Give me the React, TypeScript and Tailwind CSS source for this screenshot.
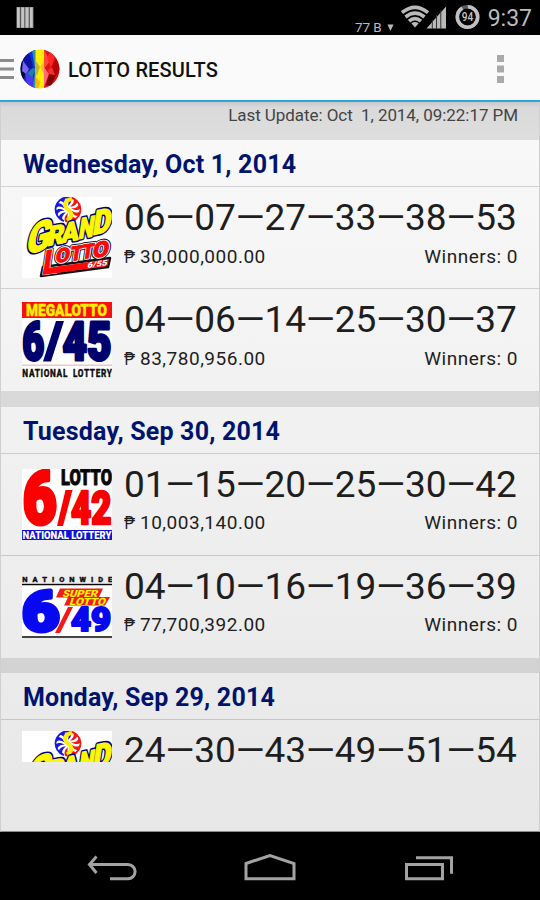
import type { ReactNode } from 'react';

type Game = 'grand' | 'mega' | 'lotto' | 'super';

interface Draw {
  game: Game;
  numbers: string[];
  prize: string;
  winners: number;
}

interface Day {
  date: string;
  draws: Draw[];
}

const DAYS: Day[] = [
  {
    date: 'Wednesday, Oct 1, 2014',
    draws: [
      { game: 'grand', numbers: ['06', '07', '27', '33', '38', '53'], prize: '30,000,000.00', winners: 0 },
      { game: 'mega', numbers: ['04', '06', '14', '25', '30', '37'], prize: '83,780,956.00', winners: 0 },
    ],
  },
  {
    date: 'Tuesday, Sep 30, 2014',
    draws: [
      { game: 'lotto', numbers: ['01', '15', '20', '25', '30', '42'], prize: '10,003,140.00', winners: 0 },
      { game: 'super', numbers: ['04', '10', '16', '19', '36', '39'], prize: '77,700,392.00', winners: 0 },
    ],
  },
  {
    date: 'Monday, Sep 29, 2014',
    draws: [
      { game: 'grand', numbers: ['24', '30', '43', '49', '51', '54'], prize: '', winners: 0 },
    ],
  },
];

export default function App() {
  return (
    <div className="w-[540px] h-[900px] flex flex-col overflow-hidden bg-black font-[Roboto,sans-serif]">
      <StatusBar />
      <ActionBar />
      <main className="h-[730px] shrink-0 flex flex-col border-x border-[#cfcfcf] border-b border-b-[#8a8a8a] bg-linear-to-b from-[#f9f9f9] to-[#e7e7e7]">
        <div className="h-[38px] shrink-0 bg-linear-to-b from-[#c8c8c8] via-[#dadada] via-15% to-[#dedede] pr-[21px] text-right text-[17px] leading-[26px] tracking-[-0.06px] text-[#444] whitespace-pre">
          Last Update: Oct  1, 2014, 09:22:17 PM
        </div>
        <div className="h-[622px] shrink-0 overflow-hidden">
          {DAYS.map((day) => (
            <DayGroup key={day.date} day={day} />
          ))}
        </div>
      </main>
      <NavBar />
    </div>
  );
}

function StatusBar() {
  return (
    <div className="h-[35px] shrink-0 flex items-start justify-between bg-black text-[#bcbcbc]">
      <svg className="ml-4 mt-[7px]" width="18" height="21">
        {[0, 1, 2, 3].map((i) => (
          <g key={i}>
            <rect x={0.5 + i * 4.3} y="0" width="4" height="21" fill="#8d8d8d" />
            <rect x={1 + i * 4.3} y="0.5" width="2.7" height="20" fill="#c4c4c4" />
          </g>
        ))}
      </svg>
      <div className="flex items-start pr-[8px]">
        <span className="mt-[20px] text-[13.5px] leading-[15px] tracking-[-0.1px]">77 B</span>
        <svg className="mt-[24px] ml-[5px]" width="7" height="8">
          <path d="M0.5 0.5h6L3.5 7z" fill="#b9b9b9" />
        </svg>
        <svg className="mt-[4px] ml-[7px]" width="47" height="26">
          <g fill="none" stroke="#b9b9b9" strokeWidth="3.6">
            <path d="M1 8.6Q14 -2 27 8.6" />
            <path d="M4.5 13Q14 5.2 23.5 13" />
            <path d="M8 17.2Q14 12 20 17.2" />
          </g>
          <path d="M10.3 19.2Q14 16.8 17.7 19.2L14 23.5z" fill="#b9b9b9" />
          <path d="M25.5 24.5L45 2.5v22z" fill="#b9b9b9" />
          <path d="M31.3 16v9M35.5 11v14M39.8 6v19" stroke="#333" strokeWidth="1" />
        </svg>
        <svg className="mt-[4px] ml-[7px]" width="26" height="27">
          <circle cx="12.5" cy="13" r="10.2" fill="none" stroke="#5a5a5a" strokeWidth="3.4" />
          <circle cx="12.5" cy="13" r="10.2" fill="none" stroke="#c0c0c0" strokeWidth="3.6" strokeDasharray="58 7" transform="rotate(-88 12.5 13)" />
          <text x="12.5" y="17.3" textAnchor="middle" fontSize="12" fontWeight="500" textLength="11.5" lengthAdjust="spacingAndGlyphs" fill="#c4c4c4">94</text>
        </svg>
        <span className="ml-[7px] mt-[5px] text-[23px] leading-[28px]">9:37</span>
      </div>
    </div>
  );
}

function ActionBar() {
  return (
    <header className="h-[67px] shrink-0 flex items-center border-b-2 border-[#2ba6da] bg-[#fafafa] pt-[3px]">
      <svg width="14" height="20">
        <path d="M0 1.5h14M0 10h14M0 18.5h14" stroke="#8c8c8c" strokeWidth="3" />
      </svg>
      <AppIcon />
      <h1 className="ml-2 mt-px text-[20px] leading-6 font-medium tracking-[0.15px] text-[#111]">LOTTO RESULTS</h1>
      <svg className="ml-auto mr-[36px]" width="7" height="28">
        <path d="M0 0h7v7h-7zM0 10.5h7v7h-7zM0 21h7v7h-7z" fill="#a9a9a9" />
      </svg>
    </header>
  );
}

function AppIcon() {
  return (
    <svg className="ml-[6px]" width="40" height="40" viewBox="0 0 40 40">
      <clipPath id="ball">
        <circle cx="20" cy="20" r="19.5" />
      </clipPath>
      <g clipPath="url(#ball)">
        <path d="M0 0h15v40H0z" fill="#2222c8" />
        <path d="M0 9L7 18L4 30L0 30z" fill="#080830" />
        <path d="M2 9L8 3L14 18L9 20z" fill="#1212a0" />
        <path d="M3 12L9 20L6 25L2 22z" fill="#7468ee" />
        <path d="M5 24L13 26L15 40H8z" fill="#4b3bf0" />
        <path d="M10 3L15 0V16L13 19z" fill="#1430e0" />
        <path d="M13 19L7 24L12 28L16 20z" fill="#1b7fa8" />
        <path d="M12 1h4v39h-3l2-20z" fill="#2895a8" />
        <path d="M15.500 0h8.500v40h-8.500z" fill="#ffee00" />
        <path d="M16 12L20 18L17 27L15 24z" fill="#b8b838" />
        <path d="M20 18L25 10V28z" fill="#ffbf18" />
        <path d="M16 28L20 33L18 40H15z" fill="#ffb400" />
        <path d="M24 0h16v40H24z" fill="#dd1111" />
        <path d="M24 1L30 12L24 20z" fill="#ff4a3a" />
        <path d="M24 18L29 25L24 38z" fill="#ff6878" />
        <path d="M30 3L35 8L31 19L27 9z" fill="#ff2626" />
        <path d="M31 19L36 9L40 20L36 28z" fill="#b40000" />
        <path d="M29 25L36 26L31 37L26 36z" fill="#820000" />
        <path d="M28 21L32 18L35 26L29 25z" fill="#ee3030" />
      </g>
    </svg>
  );
}

function DayGroup({ day }: { day: Day }) {
  return (
    <section>
      <h2 className="h-[47px] border-b border-black/15 pl-[22px] pt-[10px] text-[25px] leading-[30px] font-bold tracking-[0.2px] text-[#00146e]">
        {day.date}
      </h2>
      <div className="divide-y divide-black/15">
        {day.draws.map((draw) => (
          <DrawRow key={draw.game} draw={draw} />
        ))}
      </div>
      <div className="h-[15.5px] bg-black/10" />
    </section>
  );
}

function DrawRow({ draw }: { draw: Draw }) {
  return (
    <div className="h-[102px] flex pl-[21px] pr-[21px]">
      <div className="w-[90px] h-full shrink-0 flex items-center">
        <Logo game={draw.game} />
      </div>
      <div className="ml-3 flex-1 text-[#1e1e1e]">
        <div className="mt-[9px] text-[37px] leading-[44px] font-normal tracking-[-0.08px] whitespace-nowrap">{draw.numbers.join('—')}</div>
        <div className="mt-[4.5px] flex justify-between text-[19px] leading-[24px] tracking-[0.5px]">
          <span className="flex">
            <span className="w-4 origin-left scale-x-[0.8]">₱</span>
            {draw.prize}
          </span>
          <span>Winners: {draw.winners}</span>
        </div>
      </div>
    </div>
  );
}

function Logo({ game }: { game: Game }) {
  switch (game) {
    case 'grand':
      return <GrandLogo />;
    case 'mega':
      return <MegaLogo />;
    case 'lotto':
      return <LottoLogo />;
    case 'super':
      return <SuperLogo />;
  }
}

// Heavy lettering stretched to an exact width
function Word({ x, y, size, width, fill, stroke, strokeWidth, transform, children }: {
  x: number; y: number; size: number; width: number; fill: string; stroke?: string; strokeWidth?: number; transform?: string; children: ReactNode;
}) {
  return (
    <text
      x={x}
      y={y}
      fontSize={size}
      fontWeight={900}
      textLength={width}
      lengthAdjust="spacingAndGlyphs"
      fill={fill}
      stroke={stroke}
      strokeWidth={strokeWidth}
      strokeLinejoin="round"
      transform={transform}
    >
      {children}
    </text>
  );
}

const GRAND_LETTERS = [
  { char: 'G', matrix: 'matrix(1 -0.3 -0.2 1 3 58)', size: 43, width: 24 },
  { char: 'R', matrix: 'matrix(1 -0.2 -0.15 1 25 49)', size: 27, width: 16 },
  { char: 'A', matrix: 'matrix(1 -0.2 -0.1 1 39 46)', size: 27, width: 17 },
  { char: 'N', matrix: 'matrix(1 -0.2 -0.15 1 56 42)', size: 29, width: 15 },
  { char: 'D', matrix: 'matrix(1 -0.2 -0.15 1 70 38)', size: 34, width: 18 },
];

const LOTTO_LETTERS = [
  { char: 'L', matrix: 'matrix(1 -0.13 -0.15 1 20 77)', size: 33, width: 15 },
  { char: 'O', matrix: 'matrix(1 -0.13 -0.15 1 33 66)', size: 20, width: 14 },
  { char: 'T', matrix: 'matrix(1 -0.13 -0.15 1 47.5 64)', size: 20, width: 12 },
  { char: 'T', matrix: 'matrix(1 -0.13 -0.15 1 59 62)', size: 20, width: 12 },
  { char: 'O', matrix: 'matrix(1 -0.13 -0.15 1 70 61)', size: 22, width: 16 },
];

const BLADES = [0, 36, 72, 108, 144, 180, 216, 252, 288, 324];

function GrandLogo() {
  return (
    <svg width="90" height="81" viewBox="0 0 90 81">
      <rect width="90" height="81" fill="#fff" />
      <g transform="translate(46 12.5)">
        {BLADES.map((angle) => (
          <path
            key={angle}
            d="M2 -3C5 -5 7 -8 5 -11.5A13 13 0 0 1 9.5 -8.5C9 -5 6 -3 2 -3z"
            fill={angle < 180 ? '#f01818' : '#1818e0'}
            transform={`rotate(${angle})`}
          />
        ))}
        <path d="M0 -12.2A12.2 12.2 0 0 0 -4 11.6" fill="none" stroke="#1818e0" strokeWidth="1.8" />
        <path d="M1 -12.2A12.2 12.2 0 0 1 4 11.6" fill="none" stroke="#f01818" strokeWidth="1.8" />
        <path d="M4 -10.5C-5 -9 -4 -3 0 0S5 7 -1 11" fill="none" stroke="#ffee00" strokeWidth="4" />
      </g>
      {GRAND_LETTERS.map((l) => (
        <Word key={l.char} x={0} y={0} size={l.size} width={l.width} fill="#00007c" stroke="#00007c" strokeWidth={4.6} transform={l.matrix}>{l.char}</Word>
      ))}
      {GRAND_LETTERS.map((l) => (
        <Word key={l.char} x={0} y={0} size={l.size} width={l.width} fill="#fdf800" stroke="#fdf800" strokeWidth={1.4} transform={l.matrix}>{l.char}</Word>
      ))}
      <path d="M19 79L21 70L88 61L86 70z" fill="#fff" stroke="#111" strokeWidth="2.6" strokeLinejoin="round" />
      {LOTTO_LETTERS.map((l, i) => (
        <Word key={i} x={0} y={0} size={l.size} width={l.width} fill="#111" stroke="#111" strokeWidth={4.8} transform={l.matrix}>{l.char}</Word>
      ))}
      {LOTTO_LETTERS.map((l, i) => (
        <Word key={i} x={0} y={0} size={l.size} width={l.width} fill="#fff" stroke="#fff" strokeWidth={2.8} transform={l.matrix}>{l.char}</Word>
      ))}
      <path d="M20.5 78L22 71.5L87 62L85.5 69z" fill="#fc0808" />
      {LOTTO_LETTERS.map((l, i) => (
        <Word key={i} x={0} y={0} size={l.size} width={l.width} fill="#fc0808" stroke="#fc0808" strokeWidth={0.9} transform={l.matrix}>{l.char}</Word>
      ))}
      <Word x={0} y={0} size={8} width={20} fill="#fff" transform="matrix(1 -0.13 -0.2 1 65 71)">6/55</Word>
    </svg>
  );
}

function MegaLogo() {
  return (
    <svg width="90" height="76" viewBox="0 0 90 76">
      <rect width="90" height="76" fill="#fff" />
      <rect width="90" height="16" fill="#f81010" />
      <Word x={4} y={13.8} size={16.5} width={81} fill="#fff200" stroke="#fff200" strokeWidth={0.4}>MEGALOTTO</Word>
      <Word x={0.3} y={58} size={53} width={22} fill="#00006c" stroke="#00006c" strokeWidth={3}>6</Word>
      <path d="M34 19h8L29 59.5h-8z" fill="#00006c" />
      <Word x={40.5} y={58} size={53} width={49} fill="#00006c" stroke="#00006c" strokeWidth={3}>45</Word>
      <rect y="62.5" width="90" height="1.5" fill="#f3c4c4" />
      <g transform="scale(0.75 1)">
        <text x="0.5" y="75" fontSize="11" fontWeight="900" textLength="60" fill="#111" stroke="#111" strokeWidth="0.3">NATIONAL</text>
        <text x="68" y="75" fontSize="11" fontWeight="900" textLength="52" fill="#111" stroke="#111" strokeWidth="0.3">LOTTERY</text>
      </g>
    </svg>
  );
}

function LottoLogo() {
  return (
    <svg width="90" height="71" viewBox="0 0 90 71">
      <rect width="90" height="71" fill="#fff" />
      <Word x={0.8} y={55} size={74} width={34} fill="#fa0000" stroke="#fa0000" strokeWidth={4}>6</Word>
      <Word x={39} y={16} size={22} width={51} fill="#080808" stroke="#080808" strokeWidth={0.9}>LOTTO</Word>
      <path d="M43.5 21h7L41 57h-6z" fill="#fa0000" />
      <Word x={49} y={55} size={46} width={40.5} fill="#fa0000" stroke="#fa0000" strokeWidth={2.6}>42</Word>
      <rect y="61" width="90" height="10" fill="#1010d8" />
      <Word x={0.5} y={69.7} size={11} width={89} fill="#fff">NATIONAL LOTTERY</Word>
    </svg>
  );
}

function SuperLogo() {
  return (
    <svg width="90" height="62" viewBox="0 0 90 62">
      <rect width="90" height="62" fill="#fff" />
      <rect width="90" height="7" fill="#ececec" />
      <text x="0.3" y="5.7" fontSize="7.5" fontWeight="900" textLength="90" fill="#111" stroke="#111" strokeWidth="0.3">NATIONWIDE</text>
      <path d="M0 8.5h90M0 61h90" stroke="#080808" strokeWidth="1.7" />
      <Word x={0} y={54.5} size={56} width={37.5} fill="#0808f0" stroke="#0808f0" strokeWidth={4}>6</Word>
      <path d="M46 31h5L38 57h-5z" fill="#f41818" />
      <path d="M38 12.5h43l-4 8.5h11l-5 8.5H42l4-8H34z" fill="#f01c1c" />
      <Word x={0} y={0} size={10} width={35} fill="#fff200" transform="matrix(1 0 -0.3 1 40 20.5)">SUPER</Word>
      <Word x={0} y={0} size={10} width={36} fill="#fff200" transform="matrix(1 0 -0.3 1 47 28.9)">LOTTO</Word>
      <Word x={49} y={55} size={32.5} width={40} fill="#0808f0" stroke="#0808f0" strokeWidth={2.2}>49</Word>
    </svg>
  );
}

function NavBar() {
  return (
    <footer className="h-[68px] shrink-0 flex items-center bg-black">
      <svg width="540" height="68" fill="none" stroke="#a3a3a3" strokeWidth="3">
        <path d="M96.5 24.5L89.5 32.500L96.5 41" />
        <path d="M90 32.500H128A7 7 0 0 1 128 46.700H110" />
        <path d="M246 31.5L270 23.5L294 31.5V46.700H246z" />
        <path d="M406.500 32.500h36v14.2h-36z" />
        <path d="M416 25.800h35.5v16" />
      </svg>
    </footer>
  );
}
